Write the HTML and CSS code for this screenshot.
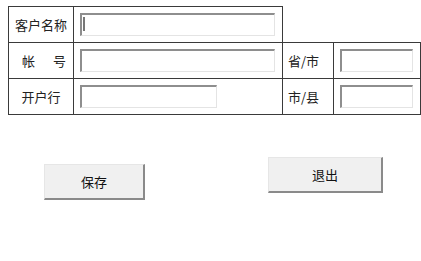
FILE: index.html
```html
<!DOCTYPE html>
<html lang="zh-CN">

<head>
    <meta charset="UTF-8">
    <title>客户资料</title>
    <link rel="stylesheet" href="styles.css">
</head>

<body>
    <table class="form-table">
        <colgroup>
            <col class="col-label">
            <col class="col-field">
            <col class="col-label2">
            <col class="col-field2">
        </colgroup>
        <tr>
            <td class="label">客户名称</td>
            <td class="field"><span class="caret-wrap"><input type="text" class="input-wide"></span></td>
            <td class="empty" colspan="2"></td>
        </tr>
        <tr>
            <td class="label spread">帐<span class="gap"></span>号</td>
            <td class="field"><input type="text" class="input-wide"></td>
            <td class="label2">省/市</td>
            <td class="field2"><input type="text" class="input-small"></td>
        </tr>
        <tr>
            <td class="label">开户行</td>
            <td class="field"><input type="text" class="input-mid"></td>
            <td class="label2">市/县</td>
            <td class="field2"><input type="text" class="input-small"></td>
        </tr>
    </table>

    <div class="actions">
        <button class="btn btn-save">保存</button>
        <button class="btn btn-exit">退出</button>
    </div>
</body>

</html>
```

FILE: styles.css
```css
body {
    margin: 0;
    padding: 6px 0 0 8px;
    font-family: "Noto Sans CJK SC", "Noto Sans", sans-serif;
    font-size: 13px;
    color: #222;
    background: #fff;
}

.form-table {
    border-collapse: collapse;
    table-layout: fixed;
    width: 412px;
}

.col-label {
    width: 65px;
}

.col-field {
    width: 209px;
}

.col-label2 {
    width: 51px;
}

.col-field2 {
    width: 87px;
}

.form-table tr {
    height: 36px;
}

.form-table td {
    border: 1px solid #3a3a3a;
    padding: 0;
}

.form-table td.empty {
    border: none;
}

.label {
    text-align: center;
}

.spread {
    text-align: left;
    padding-left: 13px !important;
}

.gap {
    display: inline-block;
    width: 18px;
}

.label2 {
    padding-left: 5px !important;
}

.field,
.field2 {
    padding-left: 6px !important;
}

input {
    display: block;
    box-sizing: border-box;
    height: 23px;
    margin: 0;
    padding: 0 2px;
    border-top: 2px solid #8e8e8e;
    border-left: 2px solid #8e8e8e;
    border-right: 1px solid #e4e4e4;
    border-bottom: 1px solid #e4e4e4;
    background: #fff;
    outline: none;
}

.input-wide {
    width: 195px;
}

.input-mid {
    width: 137px;
}

.input-small {
    width: 73px;
}

.caret-wrap {
    position: relative;
    display: block;
}

.caret-wrap::after {
    content: "";
    position: absolute;
    left: 3px;
    top: 4px;
    width: 2px;
    height: 14px;
    background: #777;
}

.actions {
    display: flex;
    align-items: flex-start;
    padding: 42px 0 0 36px;
}

.btn {
    box-sizing: border-box;
    height: 36px;
    font-family: inherit;
    font-size: 13px;
    color: #111;
    background: #f0f0f0;
    border-top: 1px solid #e6e6e6;
    border-left: 1px solid #e6e6e6;
    border-right: 2px solid #8a8a8a;
    border-bottom: 2px solid #8a8a8a;
    padding: 0;
}

.btn-save {
    width: 101px;
    margin-top: 7px;
}

.btn-exit {
    width: 115px;
    margin-left: 123px;
}
```
